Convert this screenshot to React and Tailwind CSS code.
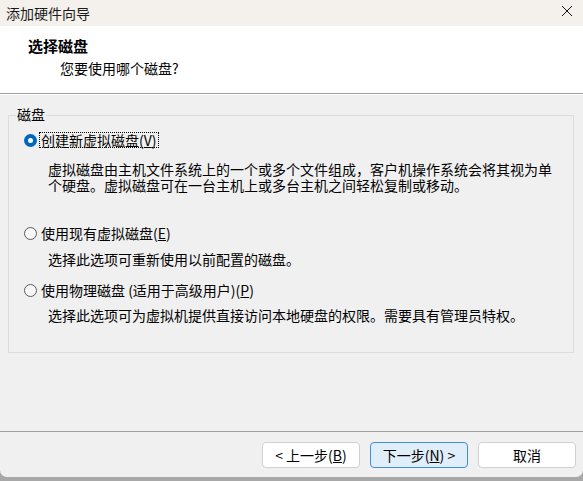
import React from "react";

const FONT = { fontFamily: '"Noto Sans CJK SC", "Noto Sans", sans-serif' };

function Radio({ checked }) {
  if (checked) {
    return (
      <span className="w-[13px] h-[13px] rounded-full bg-[#0067c0] flex items-center justify-center shrink-0">
        <span className="w-[5px] h-[5px] rounded-full bg-white" />
      </span>
    );
  }
  return <span className="w-[13px] h-[13px] rounded-full border border-[#5a5a5a] bg-[#f7f7f7] shrink-0" />;
}

function Option({ checked, label, mnemonic, focused }) {
  return (
    <div className="flex items-center h-[16px] pl-[15px]">
      <Radio checked={checked} />
      <span className={`ml-[3px] px-[1px] leading-[14px] ${focused ? "outline outline-1 outline-dotted outline-black" : ""}`}>
        {label}(<span className="underline">{mnemonic}</span>)
      </span>
    </div>
  );
}

function Button({ children, primary }) {
  return (
    <button
      className={`w-[98px] h-[26px] rounded-[4px] border text-[14px] leading-[16px] text-black ${primary ? "bg-[#e0eef9] border-[#3d8ee0]" : "bg-white border-[#d0d0d0]"}`}
      style={FONT}
    >
      {children}
    </button>
  );
}

export default function App() {
  return (
    <div className="w-[583px] h-[481px] bg-[#a8a8a8] overflow-hidden" style={FONT}>
      <div className="h-[477px] flex flex-col bg-[#f0f0f0] rounded-b-[7px] overflow-hidden text-[14px] text-black">
        {/* Title bar */}
        <div className="h-[26px] bg-[#f4f0ec] flex items-center justify-between pl-[6px] pr-[10px]">
          <span className="leading-[16px] text-[#1a1a1a]">添加硬件向导</span>
          <svg width="12" height="12" viewBox="0 0 12 12" className="mb-[4px]">
            <path d="M1 1 L11 11 M11 1 L1 11" stroke="#111" strokeWidth="1" fill="none" />
          </svg>
        </div>

        {/* Header */}
        <div className="h-[68px] bg-white border-b border-[#a0a0a0] pt-[12px]">
          <div className="pl-[28px] font-bold text-[15px] leading-[16px]">选择磁盘</div>
          <div className="pl-[60px] mt-[6px] leading-[16px]">您要使用哪个磁盘?</div>
        </div>

        {/* Body */}
        <div className="flex-1 border-t border-white">
          <div className="relative mt-[20px] ml-[8px] mr-[9px] h-[238px] border border-[#dcdcdc] pt-[16px]">
            <span className="absolute -top-[10px] left-[7px] px-[1px] bg-[#f0f0f0] leading-[16px]">磁盘</span>
            <Option checked focused label="创建新虚拟磁盘" mnemonic="V" />
            <p className="pl-[39px] pr-[14px] mt-[13px] leading-[16px]">
              虚拟磁盘由主机文件系统上的一个或多个文件组成，客户机操作系统会将其视为单个硬盘。虚拟磁盘可在一台主机上或多台主机之间轻松复制或移动。
            </p>
            <div className="mt-[32px]">
              <Option label="使用现有虚拟磁盘" mnemonic="E" />
            </div>
            <p className="pl-[39px] mt-[10px] leading-[16px]">选择此选项可重新使用以前配置的磁盘。</p>
            <div className="mt-[15px]">
              <Option label="使用物理磁盘 (适用于高级用户)" mnemonic="P" />
            </div>
            <p className="pl-[39px] mt-[9px] leading-[16px]">选择此选项可为虚拟机提供直接访问本地硬盘的权限。需要具有管理员特权。</p>
          </div>
        </div>

        {/* Footer */}
        <div className="h-[46px] border-t border-[#a0a0a0] flex justify-end gap-[10px] pt-[10px] pr-[7px]">
          <Button>&lt; 上一步(<span className="underline">B</span>)</Button>
          <Button primary>下一步(<span className="underline">N</span>) &gt;</Button>
          <Button>取消</Button>
        </div>
      </div>
    </div>
  );
}
